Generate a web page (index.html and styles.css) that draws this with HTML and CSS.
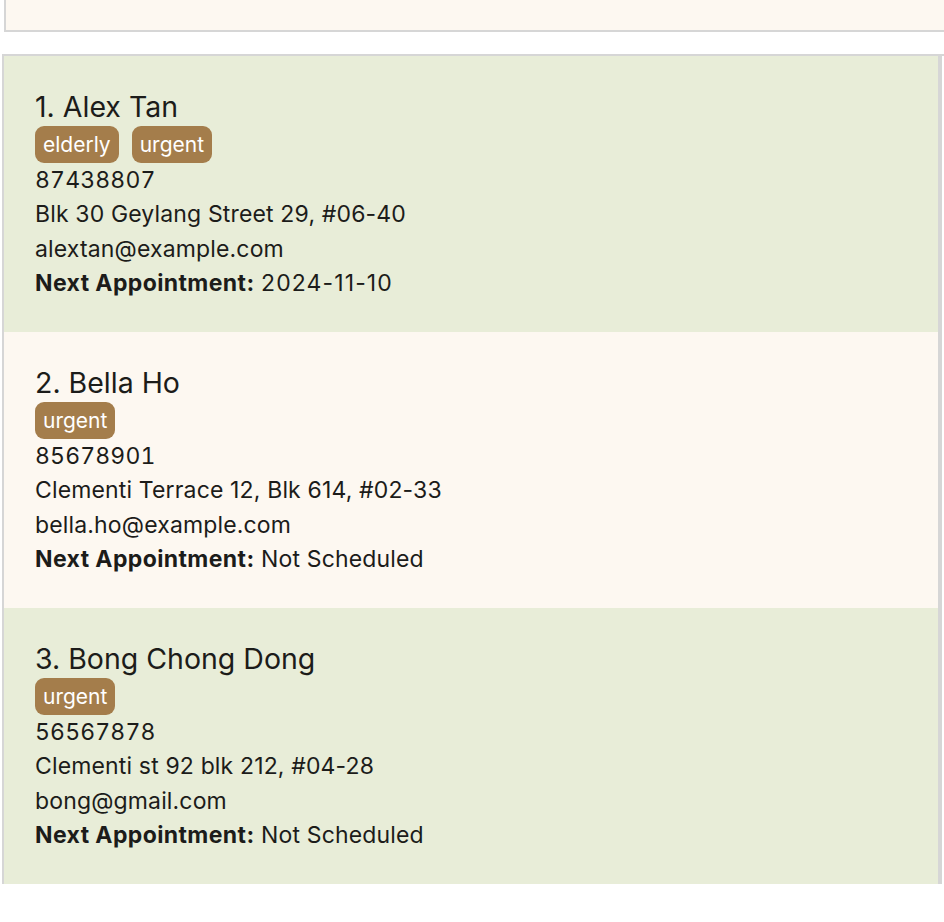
FILE: index.html
```html
<!DOCTYPE html>
<html>
<head>
<meta charset="utf-8">
<link rel="stylesheet" href="styles.css">
</head>
<body>
<div class="result-box"></div>
<div class="list-panel">
  <div class="person-list">
    <div class="card card-odd">
      <div class="name">1. Alex Tan</div>
      <div class="tags"><span class="tag">elderly</span><span class="tag">urgent</span></div>
      <div class="line phone">87438807</div>
      <div class="line">Blk 30 Geylang Street 29, #06-40</div>
      <div class="line">alextan@example.com</div>
      <div class="line"><b class="label">Next Appointment:</b> <span class="date">2024-11-10</span></div>
    </div>
    <div class="card card-even">
      <div class="name">2. Bella Ho</div>
      <div class="tags"><span class="tag">urgent</span></div>
      <div class="line phone">85678901</div>
      <div class="line">Clementi Terrace 12, Blk 614, #02-33</div>
      <div class="line">bella.ho@example.com</div>
      <div class="line"><b class="label">Next Appointment:</b> Not Scheduled</div>
    </div>
    <div class="card card-odd">
      <div class="name">3. Bong Chong Dong</div>
      <div class="tags"><span class="tag">urgent</span></div>
      <div class="line phone">56567878</div>
      <div class="line">Clementi st 92 blk 212, #04-28</div>
      <div class="line">bong@gmail.com</div>
      <div class="line"><b class="label">Next Appointment:</b> Not Scheduled</div>
    </div>
  </div>
  <div class="scroll-track"></div>
</div>
</body>
</html>
```
FILE: styles.css
```css
html, body {
  margin: 0;
  padding: 0;
  background: #ffffff;
  overflow: hidden;
}
body {
  font-family: Inter, "Noto Sans", sans-serif;
  color: #1c1c1a;
  width: 944px;
  height: 922px;
}
.result-box {
  margin-left: 4px;
  height: 30px;
  background: #fdf8f1;
  border-left: 2px solid #d6d6d6;
  border-bottom: 2px solid #d6d6d6;
}
.list-panel {
  margin-top: 22px;
  margin-left: 2px;
  border-left: 2px solid #d6d6d6;
  border-top: 2px solid #d6d6d6;
  padding-right: 2px;
  display: flex;
}
.person-list {
  flex: 1;
}
.scroll-track {
  width: 4px;
  background: #d6d6d6;
}
.card {
  height: 276px;
  box-sizing: border-box;
  padding: 33px 0 0 31px;
}
.card-odd { background: #e8edd8; }
.card-even { background: #fdf8f1; }
.name {
  font-size: 28.5px;
  line-height: 36px;
}
.tags {
  display: flex;
  gap: 13px;
  margin-top: 1px;
}
.tag {
  background: #a47d4b;
  color: #ffffff;
  font-size: 21px;
  line-height: 37px;
  height: 37px;
  padding: 0 8px;
  border-radius: 9px;
}
.line {
  font-size: 23px;
  line-height: 34.4px;
  letter-spacing: 0.15px;
}
.phone {
  font-variant-numeric: tabular-nums;
}
.date {
  letter-spacing: 1.1px;
}
.label {
  font-weight: 700;
  letter-spacing: 0.4px;
}
```
